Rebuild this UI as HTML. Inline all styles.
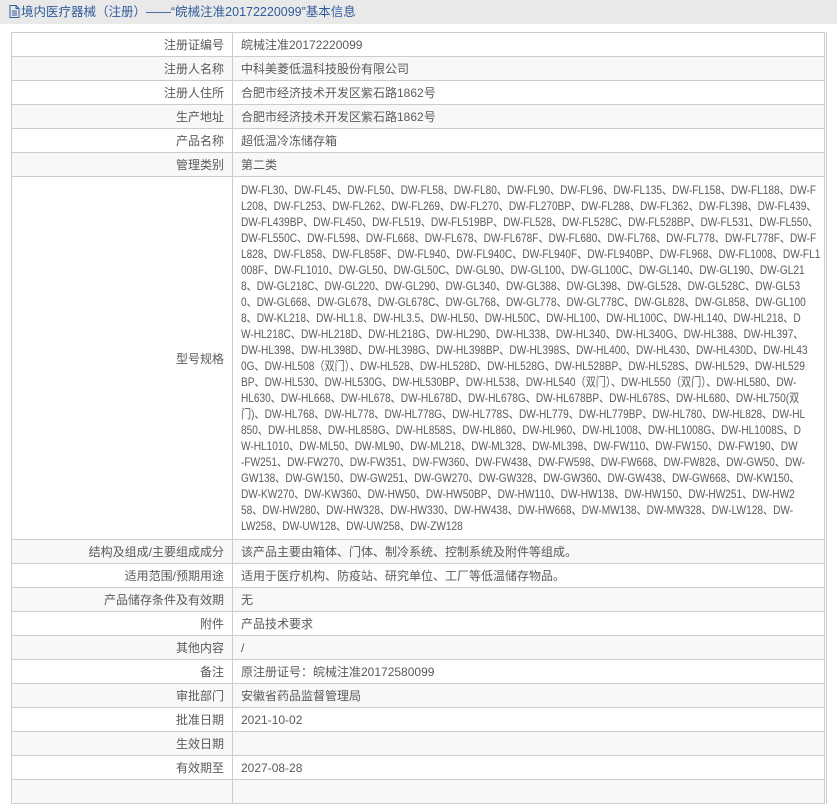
<!DOCTYPE html>
<html><head><meta charset="utf-8">
<style>
*{margin:0;padding:0;box-sizing:border-box}
body{width:837px;height:786px;overflow:hidden;background:#fff;font-family:"Liberation Sans","Noto Sans CJK SC",sans-serif;font-size:12px;color:#5a5a5a}
.hd{height:24px;background:#e9e9e9;color:#2f5c9a;font-size:12.5px;line-height:24px;padding-left:9px;white-space:nowrap}
.hd svg{vertical-align:-2px;margin-right:1px}
table{position:absolute;left:11px;top:32px;width:816px;border-collapse:collapse;border:1px solid #ccc;border-right:3px double #ccc;table-layout:fixed}
td{border:1px solid #ccc;height:24px;padding:0 8px;white-space:nowrap;vertical-align:middle;overflow:hidden}
td.l{text-align:right;padding-right:8px}
tr:nth-child(even) td{background:#f8f8f8}
td.m{padding:5px 8px;line-height:16px}
td.m div{white-space:nowrap;transform-origin:0 50%}
</style></head><body>
<div class="hd"><svg width="11" height="13" viewBox="0 0 11 13"><path d="M1 .5h6l3 3v9H1z M7 .5v3h3 M3 6h5 M3 8h5 M3 10h5" fill="none" stroke="#2f5c9a" stroke-width="1"/></svg>境内医疗器械（注册）——“皖械注准20172220099”基本信息</div>
<table>
<colgroup><col style="width:221px"><col></colgroup>
<tr><td class="l">注册证编号</td><td>皖械注准20172220099</td></tr>
<tr><td class="l">注册人名称</td><td>中科美菱低温科技股份有限公司</td></tr>
<tr><td class="l">注册人住所</td><td>合肥市经济技术开发区紫石路1862号</td></tr>
<tr><td class="l">生产地址</td><td>合肥市经济技术开发区紫石路1862号</td></tr>
<tr><td class="l">产品名称</td><td>超低温冷冻储存箱</td></tr>
<tr><td class="l">管理类别</td><td>第二类</td></tr>
<tr><td class="l">型号规格</td><td class="m" id="m" style="height:363px">
<div>DW-FL30、DW-FL45、DW-FL50、DW-FL58、DW-FL80、DW-FL90、DW-FL96、DW-FL135、DW-FL158、DW-FL188、DW-F</div>
<div>L208、DW-FL253、DW-FL262、DW-FL269、DW-FL270、DW-FL270BP、DW-FL288、DW-FL362、DW-FL398、DW-FL439、</div>
<div>DW-FL439BP、DW-FL450、DW-FL519、DW-FL519BP、DW-FL528、DW-FL528C、DW-FL528BP、DW-FL531、DW-FL550、</div>
<div>DW-FL550C、DW-FL598、DW-FL668、DW-FL678、DW-FL678F、DW-FL680、DW-FL768、DW-FL778、DW-FL778F、DW-F</div>
<div>L828、DW-FL858、DW-FL858F、DW-FL940、DW-FL940C、DW-FL940F、DW-FL940BP、DW-FL968、DW-FL1008、DW-FL1</div>
<div>008F、DW-FL1010、DW-GL50、DW-GL50C、DW-GL90、DW-GL100、DW-GL100C、DW-GL140、DW-GL190、DW-GL21</div>
<div>8、DW-GL218C、DW-GL220、DW-GL290、DW-GL340、DW-GL388、DW-GL398、DW-GL528、DW-GL528C、DW-GL53</div>
<div>0、DW-GL668、DW-GL678、DW-GL678C、DW-GL768、DW-GL778、DW-GL778C、DW-GL828、DW-GL858、DW-GL100</div>
<div>8、DW-KL218、DW-HL1.8、DW-HL3.5、DW-HL50、DW-HL50C、DW-HL100、DW-HL100C、DW-HL140、DW-HL218、D</div>
<div>W-HL218C、DW-HL218D、DW-HL218G、DW-HL290、DW-HL338、DW-HL340、DW-HL340G、DW-HL388、DW-HL397、</div>
<div>DW-HL398、DW-HL398D、DW-HL398G、DW-HL398BP、DW-HL398S、DW-HL400、DW-HL430、DW-HL430D、DW-HL43</div>
<div>0G、DW-HL508（双门）、DW-HL528、DW-HL528D、DW-HL528G、DW-HL528BP、DW-HL528S、DW-HL529、DW-HL529</div>
<div>BP、DW-HL530、DW-HL530G、DW-HL530BP、DW-HL538、DW-HL540（双门）、DW-HL550（双门）、DW-HL580、DW-</div>
<div>HL630、DW-HL668、DW-HL678、DW-HL678D、DW-HL678G、DW-HL678BP、DW-HL678S、DW-HL680、DW-HL750(双</div>
<div>门)、DW-HL768、DW-HL778、DW-HL778G、DW-HL778S、DW-HL779、DW-HL779BP、DW-HL780、DW-HL828、DW-HL</div>
<div>850、DW-HL858、DW-HL858G、DW-HL858S、DW-HL860、DW-HL960、DW-HL1008、DW-HL1008G、DW-HL1008S、D</div>
<div>W-HL1010、DW-ML50、DW-ML90、DW-ML218、DW-ML328、DW-ML398、DW-FW110、DW-FW150、DW-FW190、DW</div>
<div>-FW251、DW-FW270、DW-FW351、DW-FW360、DW-FW438、DW-FW598、DW-FW668、DW-FW828、DW-GW50、DW-</div>
<div>GW138、DW-GW150、DW-GW251、DW-GW270、DW-GW328、DW-GW360、DW-GW438、DW-GW668、DW-KW150、</div>
<div>DW-KW270、DW-KW360、DW-HW50、DW-HW50BP、DW-HW110、DW-HW138、DW-HW150、DW-HW251、DW-HW2</div>
<div>58、DW-HW280、DW-HW328、DW-HW330、DW-HW438、DW-HW668、DW-MW138、DW-MW328、DW-LW128、DW-</div>
<div>LW258、DW-UW128、DW-UW258、DW-ZW128</div>
</td></tr>
<tr><td class="l">结构及组成/主要组成成分</td><td>该产品主要由箱体、门体、制冷系统、控制系统及附件等组成。</td></tr>
<tr><td class="l">适用范围/预期用途</td><td>适用于医疗机构、防疫站、研究单位、工厂等低温储存物品。</td></tr>
<tr><td class="l">产品储存条件及有效期</td><td>无</td></tr>
<tr><td class="l">附件</td><td>产品技术要求</td></tr>
<tr><td class="l">其他内容</td><td>/</td></tr>
<tr><td class="l">备注</td><td>原注册证号：皖械注准20172580099</td></tr>
<tr><td class="l">审批部门</td><td>安徽省药品监督管理局</td></tr>
<tr><td class="l">批准日期</td><td>2021-10-02</td></tr>
<tr><td class="l">生效日期</td><td></td></tr>
<tr><td class="l">有效期至</td><td>2027-08-28</td></tr>
<tr><td class="l"></td><td></td></tr>
</table>
<script>
(function(){
var ds=document.querySelectorAll('#m div');
var d=ds[0];var s=document.createElement('span');s.textContent=d.textContent;d.textContent='';d.appendChild(s);
var w=s.getBoundingClientRect().width;var f=575/w;
d.textContent=s.textContent;
for(var i=0;i<ds.length;i++){ds[i].style.transform='scaleX('+f+')';}
})();
</script>
</body></html>
